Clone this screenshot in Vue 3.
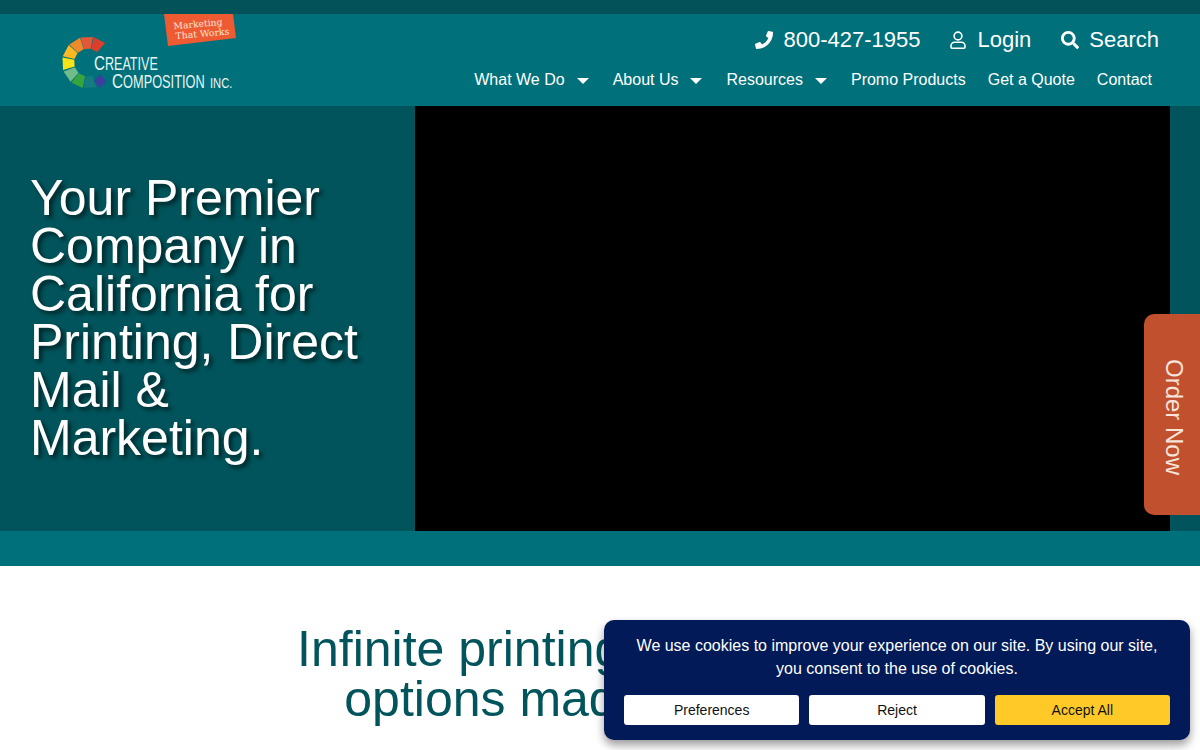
<script setup>
// colour wheel segments of the logo, angle in degrees from the top
const wheelColors = [
	{ angle: 27, color: "#d9402c" },
	{ angle: -3, color: "#e4583a" },
	{ angle: -32, color: "#ef8a2b" },
	{ angle: -62, color: "#fcb825" },
	{ angle: -93, color: "#f8e318" },
	{ angle: -124, color: "#6fbb8a" },
	{ angle: -154, color: "#36a540" },
	{ angle: 176, color: "#127c80" },
];

const polar = (r, deg) => {
	const rad = ((deg - 90) * Math.PI) / 180;
	return `${(88 + r * Math.cos(rad)).toFixed(1)} ${(62.5 + r * Math.sin(rad)).toFixed(1)}`;
};

const segmentPath = (angle) => {
	const a = angle - 14;
	const b = angle + 14;
	return `M${polar(14, a)}L${polar(26, a)}L${polar(26, b)}L${polar(14, b)}Z`;
};

const menu = [
	{ text: "What We Do", caret: true },
	{ text: "About Us", caret: true },
	{ text: "Resources", caret: true },
	{ text: "Promo Products", caret: false },
	{ text: "Get a Quote", caret: false },
	{ text: "Contact", caret: false },
];
</script>

<template>
	<div class="page">
		<div class="top-strip"></div>
		<header class="site-header">
			<svg class="logo" viewBox="0 14 240 92" width="240" height="92" role="img" aria-label="Creative Composition Inc.">
				<polygon points="164,14 233,14 236,38 168,46" fill="#ee5a32" />
				<g transform="rotate(-5 200 30)" fill="#fbe5d8" font-family="'DejaVu Serif', serif" font-size="9">
					<text x="174" y="27" textLength="49" lengthAdjust="spacingAndGlyphs">Marketing</text>
					<text x="175" y="37" textLength="54" lengthAdjust="spacingAndGlyphs">That Works</text>
				</g>
				<path v-for="seg in wheelColors" :key="seg.angle" :d="segmentPath(seg.angle)" :fill="seg.color" />
				<polygon points="100,74.5 106.5,81 100,88 94,81" fill="#3b3f9e" />
				<g fill="#e9f5f5" font-family="'Liberation Sans', sans-serif" font-size="17.5">
					<text transform="translate(94 70) scale(.72 1)"><tspan font-size="21">C</tspan>REATIVE</text>
					<text transform="translate(112 88) scale(.73 1)"><tspan font-size="21">C</tspan>OMPOSITION</text>
					<text transform="translate(210 88) scale(.8 1)" font-size="14">INC.</text>
				</g>
			</svg>
			<div class="header-right">
				<div class="contact-row">
					<a class="contact-item">
						<svg class="icon phone" viewBox="0 0 512 512" width="18" height="18"><path fill="currentColor" d="M497.39 361.8l-112-48a24 24 0 0 0-28 6.9l-49.6 60.6A370.66 370.66 0 0 1 130.6 204.11l60.6-49.6a23.94 23.94 0 0 0 6.9-28l-48-112A24.16 24.16 0 0 0 122.6.61l-104 24A24 24 0 0 0 0 48c0 256.5 207.9 464 464 464a24 24 0 0 0 23.4-18.6l24-104a24.29 24.29 0 0 0-14.01-27.6z" transform="matrix(-1 0 0 1 512 0)" /></svg>
						800-427-1955
					</a>
					<a class="contact-item">
						<svg class="icon" viewBox="0 0 16 18" width="16" height="18" fill="none" stroke="currentColor" stroke-width="1.6"><circle cx="8" cy="5" r="3.9" /><path d="M1 16.2v-1.4c0-2 1.6-3.6 3.6-3.6h6.8c2 0 3.6 1.6 3.6 3.6v1.4c0 .6-.4 1-1 1H2c-.6 0-1-.4-1-1z" /></svg>
						Login
					</a>
					<a class="contact-item">
						<svg class="icon search" viewBox="0 0 512 512" width="18" height="18"><path fill="currentColor" d="M505 442.7L405.3 343c-4.5-4.5-10.6-7-17-7H372c27.6-35.3 44-79.7 44-128C416 93.1 322.9 0 208 0S0 93.1 0 208s93.1 208 208 208c48.3 0 92.7-16.4 128-44v16.3c0 6.4 2.5 12.5 7 17l99.7 99.7c9.4 9.4 24.6 9.4 33.9 0l28.3-28.3c9.4-9.4 9.4-24.6.1-34zM208 336c-70.7 0-128-57.2-128-128 0-70.7 57.2-128 128-128 70.7 0 128 57.2 128 128 0 70.7-57.2 128-128 128z" /></svg>
						Search
					</a>
				</div>
				<nav class="main-nav">
					<a v-for="item in menu" :key="item.text" class="nav-link">
						{{ item.text }}
						<span v-if="item.caret" class="caret"></span>
					</a>
				</nav>
			</div>
		</header>

		<section class="hero">
			<div class="hero-text">
				<h1>Your Premier Company in California for Printing, Direct Mail &amp; Marketing.</h1>
			</div>
			<div class="hero-video"></div>
		</section>
		<div class="hero-strip"></div>

		<section class="intro">
			<h2>Infinite printing &amp; marketing<br />options made possible.</h2>
		</section>

		<a class="order-tab">Order Now</a>

		<div class="cookie-box">
			<p>We use cookies to improve your experience on our site. By using our site, you consent to the use of cookies.</p>
			<div class="cookie-buttons">
				<button type="button">Preferences</button>
				<button type="button">Reject</button>
				<button type="button" class="accept">Accept All</button>
			</div>
		</div>
	</div>
</template>

<style>
html,
body {
	margin: 0;
	background: #fff;
}
</style>

<style scoped>
.page {
	font-family: "Liberation Sans", Arial, sans-serif;
	width: 1200px;
	height: 750px;
	overflow: hidden;
	position: relative;
}
.top-strip {
	height: 14px;
	background: #03525a;
}
.site-header {
	height: 92px;
	background: #00707a;
	display: flex;
	justify-content: space-between;
	color: #fff;
}
.logo {
	display: block;
}
.header-right {
	display: flex;
	flex-direction: column;
	align-items: flex-end;
	padding-right: 48px;
}
.contact-row {
	display: flex;
	gap: 30px;
	height: 52px;
	align-items: center;
	margin-right: -7px;
}
.contact-item {
	display: flex;
	align-items: center;
	gap: 11px;
	font-size: 22px;
}
.icon {
	display: block;
}
.phone,
.search {
	margin-right: -1px;
}
.main-nav {
	display: flex;
	gap: 22px;
	font-size: 16px;
	padding-top: 5px;
}
.nav-link {
	display: flex;
	align-items: center;
}
.caret {
	width: 0;
	height: 0;
	margin: 2px 2px 0 12px;
	border-left: 6px solid transparent;
	border-right: 6px solid transparent;
	border-top: 6px solid #fff;
}
.hero {
	display: flex;
	height: 425px;
	background: #01545b;
}
.hero-text {
	width: 415px;
	box-sizing: border-box;
	padding: 0 30px 2px 30px;
	display: flex;
	align-items: center;
}
.hero-text h1 {
	margin: 0;
	font-size: 50px;
	font-weight: 400;
	line-height: 48px;
	color: #fff;
	text-shadow: 3px 3px 4px rgba(0, 0, 0, 0.6);
}
.hero-video {
	width: 755px;
	background: #000;
}
.hero-strip {
	height: 35px;
	background: #00707a;
}
.intro {
	padding-top: 58px;
	text-align: center;
}
.intro h2 {
	margin: 0;
	font-size: 50px;
	font-weight: 400;
	line-height: 50px;
	color: #01545b;
}
.order-tab {
	position: absolute;
	top: 314px;
	right: 0;
	width: 56px;
	height: 201px;
	box-sizing: border-box;
	padding: 6px 0 0 4px;
	display: flex;
	align-items: center;
	justify-content: center;
	background: #c1502e;
	border-radius: 10px 0 0 10px;
	color: #f6e3da;
	font-size: 24px;
	writing-mode: vertical-rl;
}
.cookie-box {
	position: absolute;
	left: 604px;
	top: 620px;
	width: 586px;
	height: 120px;
	box-sizing: border-box;
	padding: 14px 20px 15px;
	background: #021a57;
	border-radius: 10px;
	box-shadow: 0 5px 10px rgba(0, 0, 0, 0.4);
	color: #fff;
	text-align: center;
}
.cookie-box p {
	margin: 0 0 15px;
	font-size: 16px;
	line-height: 23px;
}
.cookie-buttons {
	display: grid;
	grid-template-columns: repeat(3, 1fr);
	gap: 10px;
}
.cookie-buttons button {
	height: 30px;
	border: 0;
	border-radius: 3px;
	background: #fff;
	color: #111;
	font-family: inherit;
	font-size: 14px;
}
.cookie-buttons .accept {
	background: #ffca28;
}
</style>
